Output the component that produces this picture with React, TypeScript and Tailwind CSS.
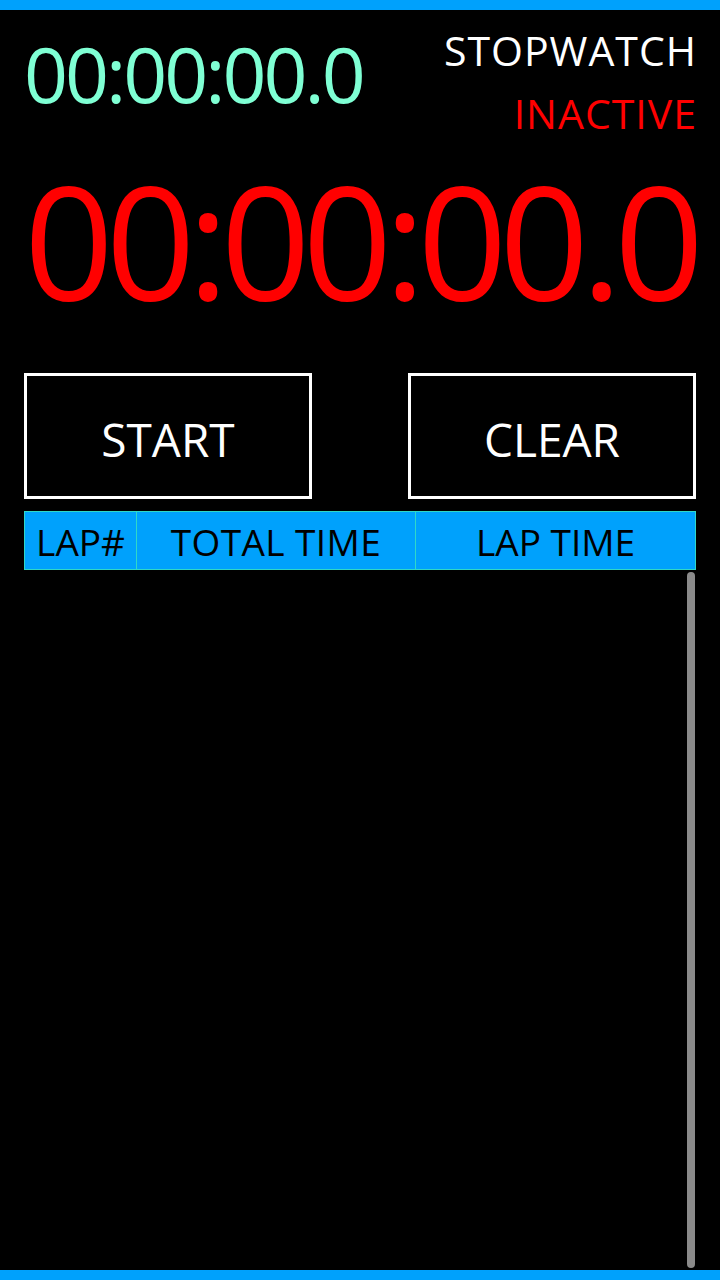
import React from "react";

export default function App() {
  return (
    <div
      className="h-[1280px] w-[720px] bg-black flex flex-col overflow-hidden"
      style={{ fontFamily: '"Open Sans", "Noto Sans", sans-serif' }}
    >
      <div className="h-[10px] bg-[#00a1fc] shrink-0" />
      <div className="flex-1 flex flex-col px-[24px] min-h-0">
        <div className="flex items-start justify-between pt-[20px]">
          <div className="mt-[5px] text-[77px] leading-none text-[#7fffd4] tracking-[-3px] whitespace-nowrap">
            00:00:00.0
          </div>
          <div className="flex flex-col items-end">
            <div className="text-[41px] leading-none text-white tracking-[1px] mr-[-1px] whitespace-nowrap">STOPWATCH</div>
            <div className="mt-[22px] text-[41px] leading-none text-[#ff0000] tracking-[1px] mr-[-1px] whitespace-nowrap">INACTIVE</div>
          </div>
        </div>
        <div className="mt-[27px] text-[157px] leading-none text-[#ff0000] tracking-[-8px] whitespace-nowrap">
          00:00:00.0
        </div>
        <div className="mt-[55px] flex justify-between">
          <div className="w-[288px] h-[126px] border-[3px] border-white flex items-center justify-center pt-[6px]">
            <span className="text-[46px] leading-none text-white">START</span>
          </div>
          <div className="w-[288px] h-[126px] border-[3px] border-white flex items-center justify-center pt-[6px]">
            <span className="text-[46px] leading-none text-white">CLEAR</span>
          </div>
        </div>
        <div className="mt-[12px] h-[59px] grid grid-cols-[112px_1fr_1fr] bg-[#00a1fc] border border-[#30d8c8]">
          <div className="flex items-center justify-center border-r border-[#30d8c8] pt-[1px]">
            <span className="text-[37px] leading-none text-black whitespace-nowrap">LAP#</span>
          </div>
          <div className="flex items-center justify-center border-r border-[#30d8c8] pt-[1px]">
            <span className="text-[37px] leading-none text-black tracking-[0.4px] whitespace-nowrap">TOTAL TIME</span>
          </div>
          <div className="flex items-center justify-center pt-[1px]">
            <span className="text-[37px] leading-none text-black whitespace-nowrap">LAP TIME</span>
          </div>
        </div>
        <div className="flex-1 flex mt-[2px] mb-[2px] min-h-0">
          <div className="flex-1" />
          <div className="w-[8px] mr-[1px] rounded-full bg-[#8a8a8a]" />
        </div>
      </div>
      <div className="h-[10px] bg-[#00a1fc] shrink-0" />
    </div>
  );
}
